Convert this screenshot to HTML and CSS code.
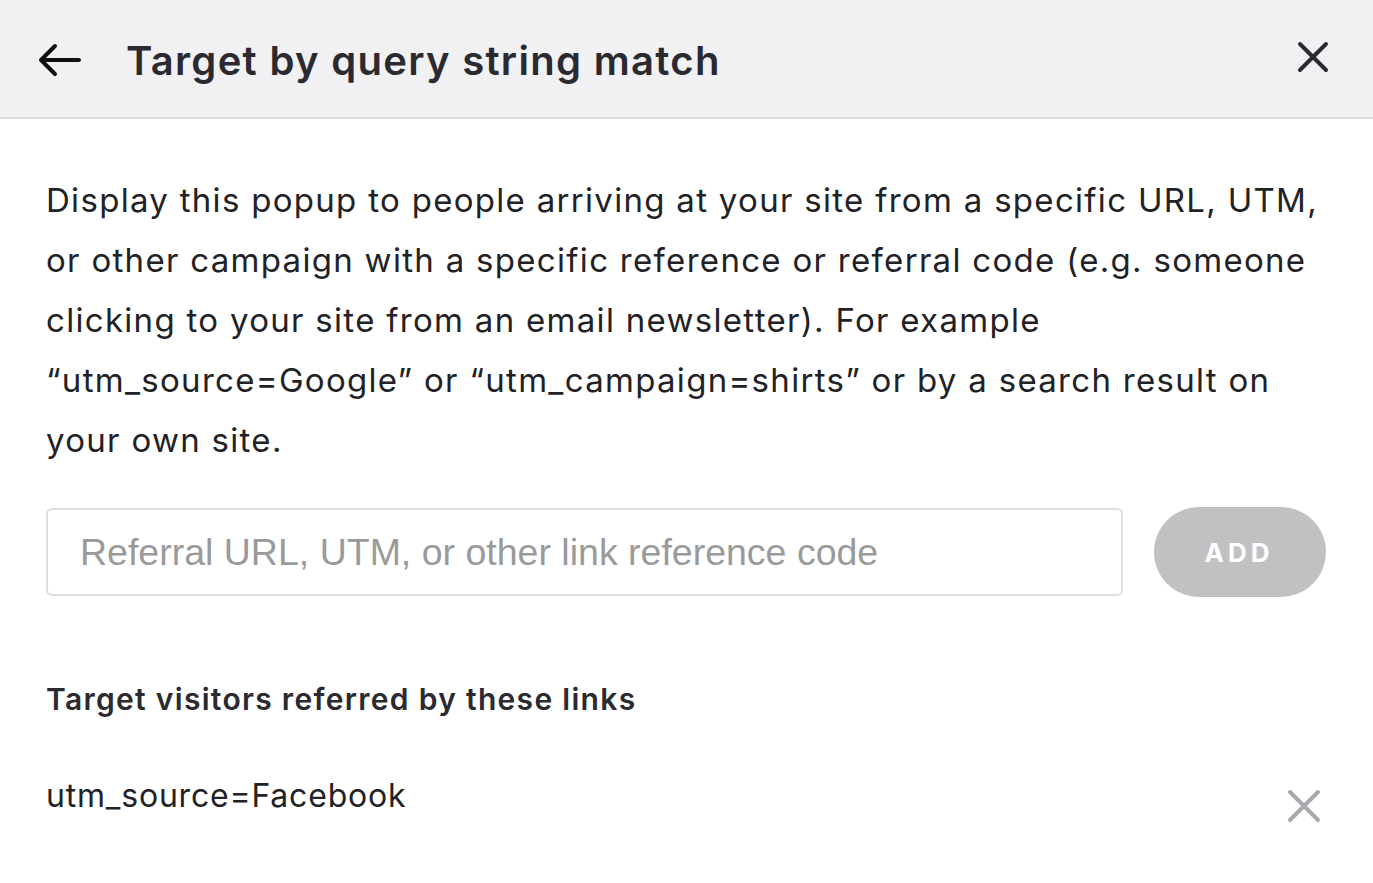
FILE: index.html
```html
<!DOCTYPE html>
<html>
<head>
<meta charset="utf-8">
<link rel="stylesheet" href="styles.css">
</head>
<body>
<div class="panel">
  <header class="header">
    <button class="icon-btn back" aria-label="Back">
      <svg width="44" height="34" viewBox="0 0 44 34"><path d="M42 17H4M18 3L4 17l14 14" fill="none" stroke="#111" stroke-width="4" stroke-linecap="round" stroke-linejoin="round"/></svg>
    </button>
    <h1 class="title">Target by query string match</h1>
    <button class="icon-btn close" aria-label="Close">
      <svg width="32" height="32" viewBox="0 0 32 32"><path d="M3 3L29 29M29 3L3 29" fill="none" stroke="#2a2a30" stroke-width="4" stroke-linecap="round"/></svg>
    </button>
  </header>
  <main class="content">
    <p class="desc">Display this popup to people arriving at your site from a specific URL, UTM, or other campaign with a specific reference or referral code (e.g. someone clicking to your site from an email newsletter). For example “utm_source=Google” or “utm_campaign=shirts” or by a search result on your own site.</p>
    <div class="add-row">
      <input class="ref-input" type="text" placeholder="Referral URL, UTM, or other link reference code">
      <button class="add-btn">ADD</button>
    </div>
    <h2 class="list-title">Target visitors referred by these links</h2>
    <ul class="links">
      <li class="link-item">
        <span class="link-text">utm_source=Facebook</span>
        <button class="icon-btn remove" aria-label="Remove">
          <svg width="34" height="34" viewBox="0 0 34 34"><path d="M3 3L31 31M31 3L3 31" fill="none" stroke="#a9a9ae" stroke-width="4" stroke-linecap="round"/></svg>
        </button>
      </li>
    </ul>
  </main>
</div>
</body>
</html>
```
FILE: styles.css
```css
html, body {
  margin: 0;
  padding: 0;
  background: #fff;
}
body {
  font-family: Inter, "Noto Sans", sans-serif;
  color: #26262c;
}
.panel {
  width: 1373px;
  min-height: 883px;
}
.header {
  background: #f1f1f3;
  border-bottom: 2px solid #dcdcde;
  display: flex;
  align-items: center;
  padding: 0 44px 0 36px;
  box-sizing: border-box;
  height: 119px;
}
.icon-btn {
  background: none;
  border: 0;
  padding: 0;
  display: flex;
  align-items: center;
  justify-content: center;
  cursor: pointer;
}
.back {
  width: 46px;
  margin-right: 44px;
  margin-top: 2px;
}
.title {
  flex: 1;
  margin: 0;
  font-size: 40px;
  font-weight: 600;
  color: #2a2a30;
  letter-spacing: 1.3px;
  padding-top: 3px;
}
.close {
  width: 32px;
  height: 32px;
  margin-top: -4px;
}
.content {
  padding: 0 46px 0 46px;
}
.desc {
  margin: 51px 0 0 0;
  font-size: 33px;
  line-height: 60px;
  color: #222226;
  letter-spacing: 1.3px;
}
.add-row {
  display: flex;
  align-items: center;
  gap: 31px;
  margin-top: 37px;
}
.ref-input {
  flex: 1;
  height: 88px;
  box-sizing: border-box;
  border: 2px solid #dedede;
  border-radius: 6px;
  padding: 0 32px;
  font-family: "Liberation Sans", Arial, sans-serif;
  font-size: 37.5px;
  color: #333;
  outline: none;
}
.ref-input::placeholder {
  color: #9a9a9a;
}
.add-btn {
  width: 172px;
  height: 90px;
  border: 0;
  border-radius: 45px;
  background: #c1c1c3;
  color: #fff;
  font-family: Inter, "Noto Sans", sans-serif;
  font-weight: 700;
  font-size: 26px;
  letter-spacing: 4px;
  padding-left: 4px;
  margin-right: 1px;
}
.list-title {
  margin: 82px 0 0 0;
  font-size: 30px;
  font-weight: 600;
  line-height: 40px;
  color: #2a2a30;
  letter-spacing: 1.3px;
}
.links {
  list-style: none;
  margin: 57px 0 0 0;
  padding: 0;
}
.link-item {
  display: flex;
  align-items: flex-start;
  justify-content: space-between;
}
.link-text {
  font-size: 32px;
  line-height: 40px;
  color: #222226;
  letter-spacing: 0.8px;
}
.remove {
  width: 34px;
  height: 34px;
  margin-top: 13px;
  margin-right: 6px;
}
```
